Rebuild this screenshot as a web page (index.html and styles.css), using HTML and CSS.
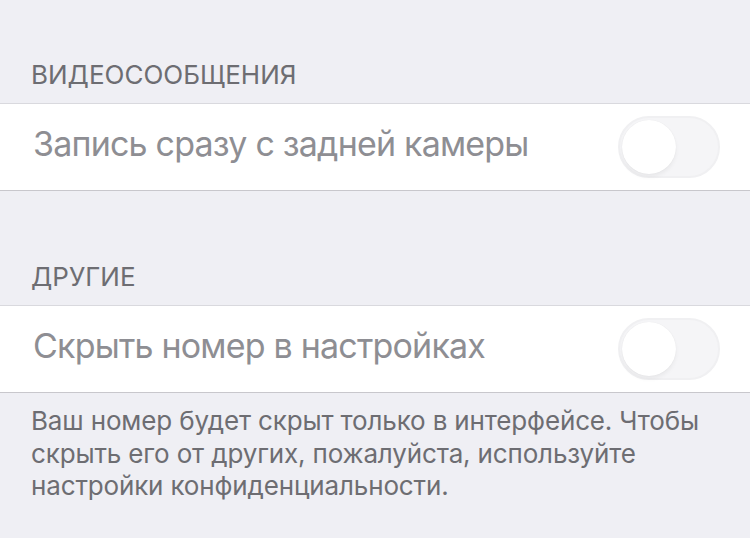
FILE: index.html
```html
<!DOCTYPE html>
<html lang="ru">
<head>
  <meta charset="UTF-8" />
  <meta name="viewport" content="width=device-width, initial-scale=1" />
  <title>Настройки</title>
  <link rel="stylesheet" href="styles.css">
</head>
<body>

  <main class="settings">
    <h2 class="group-title first">Видеосообщения</h2>
    <div class="group">
      <div class="row">
        <span class="row-label">Запись сразу с задней камеры</span>
        <span class="switch" role="switch" aria-checked="false"><span class="knob"></span></span>
      </div>
    </div>

    <h2 class="group-title">Другие</h2>
    <div class="group">
      <div class="row">
        <span class="row-label">Скрыть номер в настройках</span>
        <span class="switch" role="switch" aria-checked="false"><span class="knob"></span></span>
      </div>
    </div>
    <p class="group-note">Ваш номер будет скрыт только в интерфейсе. Чтобы скрыть его от других, пожалуйста, используйте настройки конфиденциальности.</p>
  </main>

</body>
</html>
```

FILE: styles.css
```css
/* Reset & Base */
* { box-sizing: border-box; margin: 0; padding: 0; }
body {
  font-family: Inter, 'Liberation Sans', sans-serif;
  background: #efeff4;
  color: #6d6d72;
  width: 750px;
  height: 538px;
  overflow: hidden;
}

/* Group headers */
.group-title {
  height: 114px;
  display: flex;
  align-items: flex-end;
  padding: 0 0 15px 31px;
  font-size: 26px;
  font-weight: 400;
  line-height: 1;
  text-transform: uppercase;
  color: #6d6d72;
}
.group-title.first { height: 103px; }

/* Rows */
.group {
  background: #fff;
  border-top: 1px solid #d9d9de;
  border-bottom: 1px solid #c8c7cc;
}
.row {
  height: 86px;
  display: flex;
  align-items: center;
  justify-content: space-between;
  padding: 0 30px 0 33px;
}
.row-label {
  font-size: 34px;
  letter-spacing: -0.8px;
  color: #8e8e93;
  margin-bottom: 7px;
}

/* Disabled switch */
.switch {
  position: relative;
  width: 102px;
  height: 62px;
  border-radius: 31px;
  background: #f5f5f7;
  border: 2px solid #f0f0f2;
}
.knob {
  position: absolute;
  top: 2px;
  left: 2px;
  width: 54px;
  height: 54px;
  border-radius: 50%;
  background: #fff;
  box-shadow: 0 3px 4px rgba(0, 0, 0, 0.05), 0 0 1px rgba(0, 0, 0, 0.08);
}

/* Footer note */
.group-note {
  padding: 12px 30px 0 31px;
  font-size: 26px;
  line-height: 32.5px;
  letter-spacing: -0.15px;
  color: #6d6d72;
}
```
